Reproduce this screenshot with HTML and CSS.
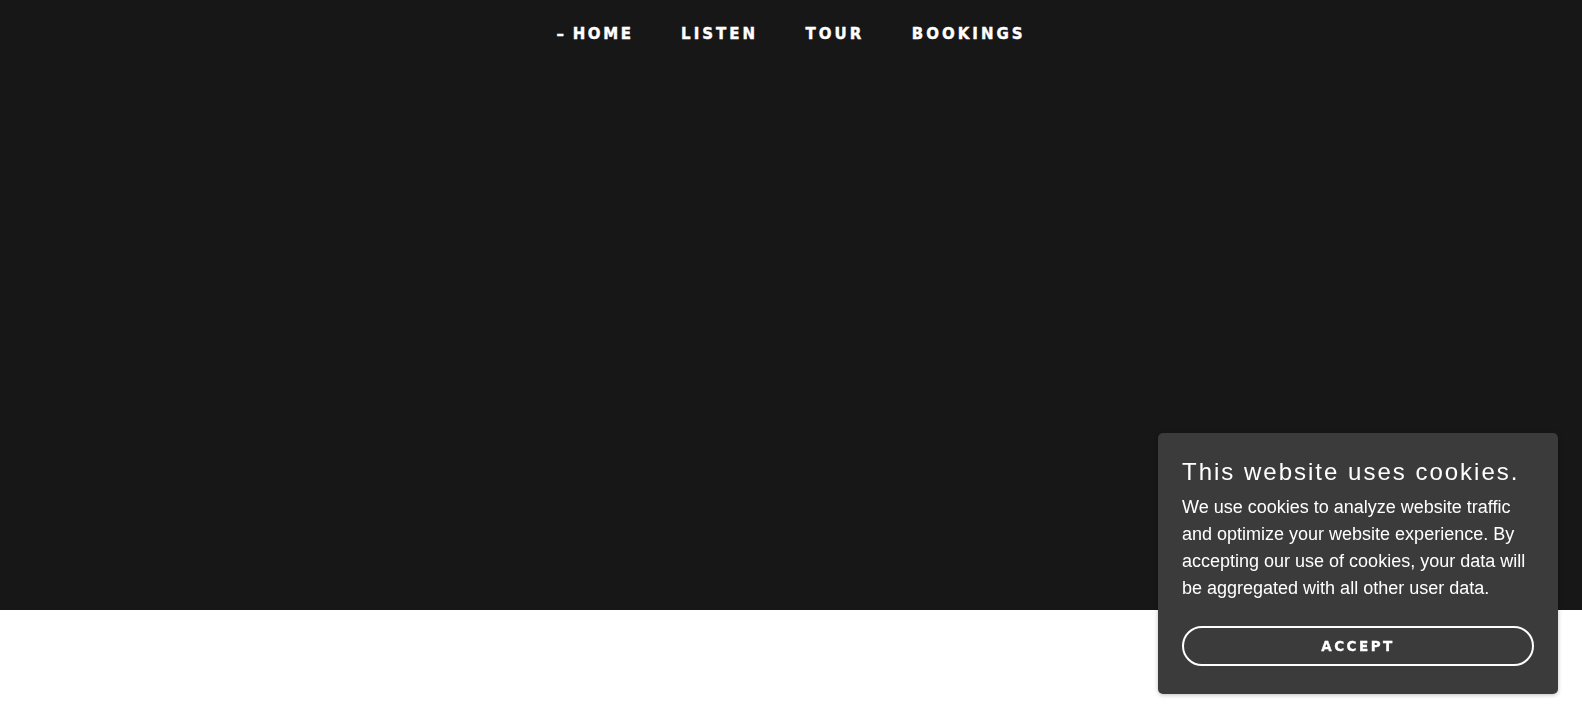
FILE: index.html
```html
<!DOCTYPE html>
<html>
<head>
<meta charset="utf-8">
<link rel="stylesheet" href="styles.css">
</head>
<body>
<div class="page">
  <header class="hero">
    <nav class="nav">
      <a class="nav-item active" href="#"><span class="dash">–</span> HOME</a>
      <a class="nav-item" href="#">LISTEN</a>
      <a class="nav-item" href="#">TOUR</a>
      <a class="nav-item" href="#">BOOKINGS</a>
    </nav>
  </header>
  <main class="content"></main>
</div>
<div class="cookie">
  <h2 class="cookie-title">This website uses cookies.</h2>
  <p class="cookie-text">We use cookies to analyze website traffic and optimize your website experience. By accepting our use of cookies, your data will be aggregated with all other user data.</p>
  <button class="cookie-btn">ACCEPT</button>
</div>
</body>
</html>
```

FILE: styles.css
```css
html, body {
  margin: 0;
  padding: 0;
  background: #ffffff;
  font-family: "Liberation Sans", Arial, sans-serif;
}
.hero {
  background: #171717;
  height: 610px;
  display: flex;
  flex-direction: column;
  align-items: center;
}
.nav {
  display: flex;
  gap: 47.5px;
  padding-top: 26px;
}
.nav-item {
  color: #ffffff;
  text-decoration: none;
  font-family: "DejaVu Sans", sans-serif;
  font-weight: bold;
  font-size: 15px;
  letter-spacing: 3px;
  line-height: 17px;
  -webkit-text-stroke: 0.4px #ffffff;
}
.nav-item.active {
  letter-spacing: 2.6px;
}
.dash {
  letter-spacing: 0;
  margin-right: 1px;
}
.content {
  height: 107px;
}
.cookie {
  position: fixed;
  right: 24px;
  bottom: 23px;
  width: 352px;
  padding: 25px 24px 28px 24px;
  background: #3b3b3b;
  border-radius: 5px;
  box-shadow: 0 1px 4px rgba(0,0,0,0.25);
  color: #ffffff;
}
.cookie-title {
  margin: 0;
  font-weight: normal;
  font-size: 24px;
  letter-spacing: 2px;
  line-height: 28px;
}
.cookie-text {
  margin: 8px 0 0 0;
  font-size: 18px;
  line-height: 27px;
}
.cookie-btn {
  display: block;
  margin-top: 24px;
  width: 352px;
  height: 40px;
  background: transparent;
  border: 2px solid #ffffff;
  border-radius: 20px;
  color: #ffffff;
  font-family: "DejaVu Sans", sans-serif;
  font-weight: bold;
  font-size: 13.5px;
  letter-spacing: 2.5px;
  padding: 0;
  -webkit-text-stroke: 0.3px #ffffff;
}
```
